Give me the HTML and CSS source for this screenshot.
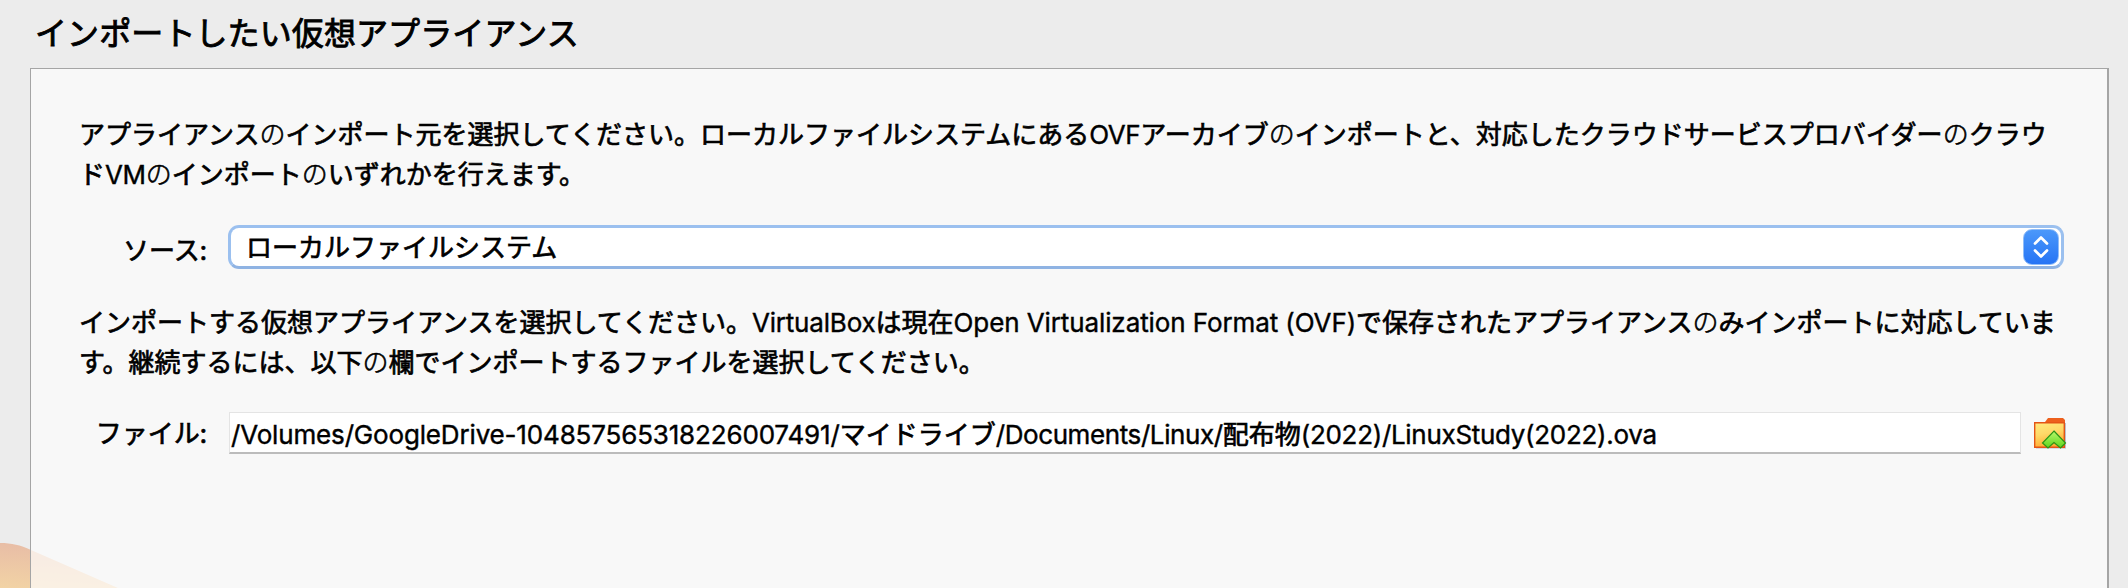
FILE: index.html
```
<!DOCTYPE html>
<html lang="ja">
<head>
<meta charset="utf-8">
<title>仮想アプライアンスのインポート</title>
<link rel="stylesheet" href="styles.css">
</head>
<body>
<svg class="backdrop" width="130" height="50" viewBox="0 0 130 50" aria-hidden="true">
  <defs><linearGradient id="peach" x1="0.15" y1="0" x2="0" y2="1"><stop offset="0" stop-color="#e8bda6"/><stop offset="1" stop-color="#f2d3a5"/></linearGradient></defs>
  <path d="M0 5C12 5 20 7 31 12L118 50H0Z" fill="url(#peach)"/>
</svg>
<main class="page">
  <h1 class="title">インポートしたい仮想アプライアンス</h1>
  <section class="panel">
    <p class="text">アプライアンス<span class="no">の</span>インポート元を選択してください。ローカルファイルシステムにある<span class="latin">OVF</span>アーカイブ<span class="no">の</span>インポートと、対応したクラウドサービスプロバイダー<span class="no">の</span>クラウ<br>ド<span class="latin">VM</span><span class="no">の</span>インポート<span class="no">の</span>いずれかを行えます。</p>
    <div class="row source">
      <span class="label">ソース:</span>
      <div class="select"><span class="value">ローカルファイルシステム</span>
        <span class="stepper"><svg width="16" height="24" viewBox="0 0 16 24"><path d="M2 8.5L8 2.5L14 8.5M2 15.5L8 21.5L14 15.5" fill="none" stroke="#fff" stroke-width="2.7" stroke-linecap="round" stroke-linejoin="round"/></svg></span>
      </div>
    </div>
    <p class="text">インポートする仮想アプライアンスを選択してください。<span class="latin product">VirtualBox</span>は現在<span class="latin format">Open Virtualization Format (OVF)</span>で保存されたアプライアンス<span class="no">の</span>みインポートに対応していま<br>す。継続するには、以下<span class="no">の</span>欄でインポートするファイルを選択してください。</p>
    <div class="row file">
      <span class="label">ファイル:</span>
      <div class="field"><span class="latin volume">/Volumes/GoogleDrive-104857565318226007491/</span>マイドライブ<span class="latin">/Documents/Linux/</span>配布物<span class="latin name">(2022)/LinuxStudy(2022).ova</span></div>
      <svg class="folder" width="34" height="34" viewBox="0 0 34 34">
        <defs>
          <linearGradient id="paper" x1="0" y1="0" x2="0.3" y2="1"><stop offset="0" stop-color="#ffeb80"/><stop offset="0.5" stop-color="#ffd968"/><stop offset="1" stop-color="#ffab32"/></linearGradient>
          <linearGradient id="arrow" x1="0" y1="0" x2="0" y2="1"><stop offset="0" stop-color="#b7f76b"/><stop offset="1" stop-color="#5ed51b"/></linearGradient>
        </defs>
        <path d="M2 6H32V31.5H2Z" fill="#b9bfca"/>
        <path d="M11 5L14 1H29L31 3V8H11Z" fill="#ed601d"/>
        <path d="M.7 5.7H30.3V30.3H.7Z" fill="url(#paper)" stroke="#e45516" stroke-width="1.4"/>
        <path d="M20 14L31.5 26L26.5 31L20 25.5L14 31L8.5 26Z" fill="url(#arrow)" stroke="#2c9415" stroke-width="1.2"/>
      </svg>
    </div>
  </section>
</main>
</body>
</html>
```
FILE: styles.css
```
* { box-sizing: border-box; }
body {
  margin: 0;
  width: 2128px;
  height: 588px;
  overflow: hidden;
  position: relative;
  background: #ececec;
  color: #000;
  font: 26px/40px "Noto Sans CJK JP", sans-serif;
  -webkit-text-stroke: 0.7px #000;
}
.backdrop { position: absolute; left: 0; bottom: 0; }
.page {
  position: relative;
  display: flex;
  flex-direction: column;
  height: 588px;
  padding: 0 19px 0 30px;
}
.title {
  margin: 0;
  height: 68px;
  padding: 11px 0 0 5px;
  font-size: 32px;
  line-height: 40px;
  letter-spacing: 0.1px;
  font-weight: 400;
  -webkit-text-stroke-width: 0.9px;
}
.panel {
  flex: 1;
  border: 1px solid #a5a5a5;
  border-right-width: 2px;
  border-bottom: 0;
  background: rgba(253, 253, 253, 0.7);
  padding: 44px 0 0 47px;
}
.text { margin: 0; height: 80px; padding-left: 1px; white-space: nowrap; }
.no { font-weight: 300; line-height: 0; -webkit-text-stroke-width: 0.6px; }
.latin {
  font-family: Inter, sans-serif;
  line-height: 0;
  letter-spacing: -0.4px;
  -webkit-text-stroke-width: 0.4px;
}
.product { letter-spacing: -0.18px; }
.format { letter-spacing: -0.1px; }
.volume { letter-spacing: -0.16px; }
.name { letter-spacing: -0.3px; }
.row { display: flex; }
.label { width: 129px; text-align: right; margin-right: 21px; white-space: nowrap; }
.source { margin-top: 32px; height: 44px; }
.source .label { padding-top: 4px; }
.select {
  width: 1836px;
  height: 44px;
  display: flex;
  align-items: center;
  justify-content: space-between;
  padding: 0 2px 0 15px;
  border: 3px solid #9bc0ef;
  border-bottom-color: #8fb3e3;
  border-radius: 11px;
  background: #fff;
}
.value { padding-bottom: 2px; }
.stepper {
  width: 36px;
  height: 36px;
  display: flex;
  align-items: center;
  justify-content: center;
  border: 1px solid #8fbcf8;
  border-radius: 9px;
  background: linear-gradient(#4b98fa, #2674f5);
}
.source + .text { margin-top: 32px; }
.file { margin-top: 31px; height: 42px; }
.field {
  width: 1792px;
  height: 42px;
  margin-left: 1px;
  padding: 0 0 0 1px;
  border: 1px solid #e4e4e4;
  border-bottom: 2px solid #bcbcbc;
  background: #fff;
  white-space: nowrap;
}
.folder { margin: 5px 0 0 13px; }
```
